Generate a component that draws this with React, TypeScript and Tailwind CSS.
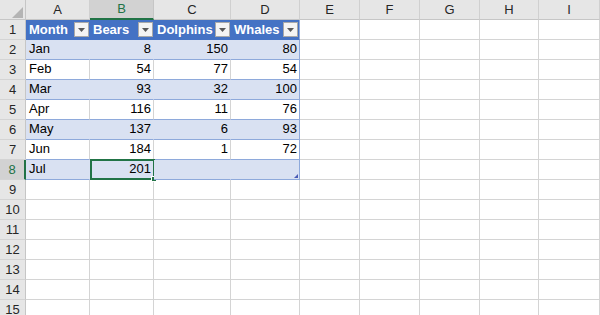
const colLetters = ["A", "B", "C", "D", "E", "F", "G", "H", "I"];

const data: [string, string, string, string][] = [
  ["Jan", "8", "150", "80"],
  ["Feb", "54", "77", "54"],
  ["Mar", "93", "32", "100"],
  ["Apr", "116", "11", "76"],
  ["May", "137", "6", "93"],
  ["Jun", "184", "1", "72"],
  ["Jul", "201", "", ""],
];

const heads = ["Month", "Bears", "Dolphins", "Whales"];

const FilterButton = () => (
  <div className="w-[15px] h-[15px] mr-[1px] shrink-0 bg-[#f4f4f4] border border-[#a9a9a9] flex items-center justify-center">
    <svg width="7" height="4" viewBox="0 0 7 4">
      <path d="M0 0h7L3.5 4z" fill="#595959" />
    </svg>
  </div>
);

const App = () => {
  return (
    <div
      className="w-[600px] h-[315px] overflow-hidden bg-white text-[13px] text-black"
      style={{ fontFamily: '"Liberation Sans", Arial, sans-serif' }}
    >
      <div className="grid grid-cols-[26px_64px_64px_77px_69px_60px_60px_60px_59px_61px] auto-rows-[20px]">
        {/* column header row */}
        <div className="relative bg-[#e6e6e6] border-r border-b border-[#c6c6c6]">
          <svg className="absolute left-[12px] top-[7px]" width="11" height="11" viewBox="0 0 11 11">
            <path d="M11 0v11H0z" fill="#b4b4b4" />
          </svg>
        </div>
        {colLetters.map((l) =>
          l === "B" ? (
            <div
              key={l}
              className="bg-[#d2d2d2] border-r border-[#c6c6c6] border-b-2 border-b-[#217346] flex items-center justify-center text-[#217346]"
            >
              {l}
            </div>
          ) : (
            <div
              key={l}
              className="bg-[#e6e6e6] border-r border-b border-[#d0d0d0] border-b-[#c6c6c6] flex items-center justify-center text-[#262626]"
            >
              {l}
            </div>
          )
        )}

        {Array.from({ length: 15 }, (_, i) => i + 1).map((r) => {
          const sel = r === 8;
          const rowHead = sel ? (
            <div
              key={`h${r}`}
              className="bg-[#d2d2d2] border-b border-[#d4d4d4] border-r-2 border-r-[#217346] flex items-center justify-center text-[#217346]"
            >
              {r}
            </div>
          ) : (
            <div
              key={`h${r}`}
              className="bg-[#e6e6e6] border-b border-[#d4d4d4] border-r border-r-[#c6c6c6] flex items-center justify-center text-[#262626]"
            >
              {r}
            </div>
          );

          let cells;
          if (r === 1) {
            cells = heads.map((h, c) => (
              <div
                key={`c${r}-${c}`}
                className={`bg-[#4472c4] border-b border-[#4472c4] ${c === 3 ? "border-r border-r-[#8ea9db]" : ""} flex items-center justify-between pl-[3px] text-white font-bold`}
              >
                <span className="pt-[1px]">{h}</span>
                <FilterButton />
              </div>
            ));
          } else if (r <= 8) {
            const band = r % 2 === 0;
            const row = data[r - 2];
            cells = row.map((v, c) => (
              <div
                key={`c${r}-${c}`}
                className={`relative border-b border-b-[#8ea9db] border-r flex items-end pb-[1px] ${
                  band ? "bg-[#d9e1f2]" : "bg-white"
                } ${
                  c === 3
                    ? "border-r-[#8ea9db]"
                    : band
                    ? "border-r-[#d9e1f2]"
                    : "border-r-[#d4d4d4]"
                } ${c === 0 ? "justify-start pl-[3px]" : "justify-end pr-[2px]"}`}
              >
                <span>{v}</span>
                {r === 8 && c === 1 && (
                  <div className="absolute left-0 top-[-1px] w-[65px] h-[21px] border-2 border-[#217346]">
                    <div className="absolute right-[-4px] bottom-[-4px] w-[6px] h-[6px] bg-[#217346] border border-white" />
                  </div>
                )}
                {r === 8 && c === 3 && (
                  <svg className="absolute right-[1px] bottom-[1px]" width="4" height="4" viewBox="0 0 4 4">
                    <path d="M4 0v4H0z" fill="#4a5bb5" />
                  </svg>
                )}
              </div>
            ));
          } else {
            cells = [0, 1, 2, 3].map((c) => (
              <div key={`c${r}-${c}`} className="border-r border-b border-[#d4d4d4]" />
            ));
          }

          const rest = [4, 5, 6, 7, 8].map((c) => (
            <div key={`e${r}-${c}`} className="border-r border-b border-[#d4d4d4]" />
          ));

          return [rowHead, ...cells, ...rest];
        })}
      </div>
    </div>
  );
};

export default App;
